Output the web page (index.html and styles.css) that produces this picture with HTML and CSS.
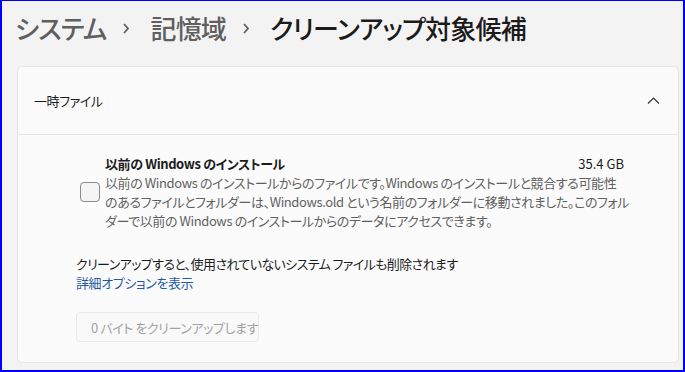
FILE: index.html
```html
<!DOCTYPE html>
<html lang="ja">

<head>
  <meta charset="UTF-8">
  <meta name="viewport" content="width=device-width, initial-scale=1.0">
  <title>クリーンアップ対象候補</title>
  <link rel="stylesheet" href="styles.css">
</head>

<body>
  <div class="frame">
    <h1 class="crumbs">
      <span class="crumbPart">システム</span>
      <svg class="crumbSep" width="6" height="11" viewBox="0 0 6 11"><polyline points="1,1 5,5.5 1,10" /></svg>
      <span class="crumbPart">記憶域</span>
      <svg class="crumbSep" width="6" height="11" viewBox="0 0 6 11"><polyline points="1,1 5,5.5 1,10" /></svg>
      <span class="crumbCurrent">クリーンアップ対象候補</span>
    </h1>

    <section class="card">
      <div class="cardHeader">
        <span class="cardTitle">一時ファイル</span>
        <svg class="chevronUp" width="13" height="7" viewBox="0 0 13 7"><polyline points="1,6.5 6.5,1 12,6.5" /></svg>
      </div>

      <div class="cardBody">
        <div class="item">
          <span class="checkbox"></span>
          <div class="itemText">
            <div class="itemTop">
              <span class="itemTitle">以前の Windows のインストール</span>
              <span class="itemSize">35.4 GB</span>
            </div>
            <p class="itemDesc">以前の Windows のインストールからのファイルです。Windows のインストールと競合する可能性<br>のあるファイルとフォルダーは、Windows.old という名前のフォルダーに移動されました。このフォル<br>ダーで以前の Windows のインストールからのデータにアクセスできます。</p>
          </div>
        </div>

        <p class="note">クリーンアップすると、使用されていないシステム ファイルも削除されます</p>
        <a class="moreLink" href="#">詳細オプションを表示</a>

        <button class="cleanBtn" disabled>0 バイト をクリーンアップします</button>
      </div>
    </section>
  </div>
</body>

</html>
```

FILE: styles.css
```css
* {
  box-sizing: border-box;
}

body {
  margin: 0;
  background: #f3f3f3;
  font-family: "Noto Sans CJK JP", sans-serif;
  font-feature-settings: "palt";
  color: #1b1b1b;
}

.frame {
  width: 685px;
  height: 372px;
  border: 2px solid #0000ff;
  border-top-width: 1px;
  padding: 13px 4px 0 15px;
  overflow: hidden;
}

.crumbs {
  display: flex;
  align-items: center;
  margin: 0 0 24px -2px;
  height: 28px;
  font-size: 26px;
  line-height: 28px;
  font-weight: 500;
  letter-spacing: -0.8px;
}

.crumbPart {
  color: #5f5f5f;
}

.crumbCurrent {
  color: #1b1b1b;
}

.crumbSep {
  margin: 0 21px 0 17px;
  fill: none;
  stroke: #5f5f5f;
  stroke-width: 1.8;
}

.card {
  background: #fbfbfb;
  border: 1px solid #e5e5e5;
  border-radius: 5px;
  height: 297px;
}

.cardHeader {
  display: flex;
  align-items: center;
  justify-content: space-between;
  height: 68px;
  padding: 0 18px 0 16px;
  border-bottom: 1px solid #e5e5e5;
  font-size: 13px;
  letter-spacing: -0.4px;
}

.chevronUp {
  fill: none;
  stroke: #333333;
  stroke-width: 1.2;
}

.cardBody {
  padding: 19px 54px 0 58px;
  font-size: 13px;
  line-height: 19px;
  letter-spacing: -0.4px;
}

.item {
  display: flex;
  align-items: center;
  margin-left: 4px;
}

.checkbox {
  flex: none;
  width: 20px;
  height: 20px;
  border: 1px solid #8a8a8a;
  border-radius: 4px;
  background: #f5f5f5;
  margin-right: 5px;
}

.itemText {
  flex: 1;
  min-width: 0;
}

.itemTop {
  display: flex;
  justify-content: space-between;
}

.itemTitle {
  font-weight: 600;
}

.itemSize {
  letter-spacing: 0;
}

.itemDesc {
  margin: 0;
  color: #616161;
  white-space: nowrap;
}

.note {
  margin: 24px 0 0 0;
  letter-spacing: -0.6px;
}

.moreLink {
  display: block;
  color: #1f5aa6;
  text-decoration: none;
}

.cleanBtn {
  display: block;
  margin-top: 20px;
  height: 30px;
  width: 183px;
  padding: 0 0 0 14px;
  text-align: left;
  white-space: nowrap;
  font-family: inherit;
  font-feature-settings: "palt";
  font-size: 13px;
  letter-spacing: -0.4px;
  color: #a2a2a2;
  background: #f9f9f9;
  border: 1px solid #e8e8e8;
  border-radius: 4px;
}
```
